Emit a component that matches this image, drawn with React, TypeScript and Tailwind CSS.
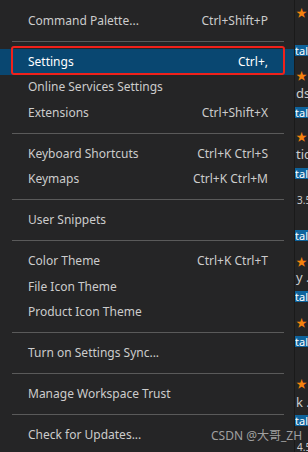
type Item = { label: string; keys?: string; active?: boolean };

const groups: Item[][] = [
  [{ label: 'Command Palette...', keys: 'Ctrl+Shift+P' }],
  [
    { label: 'Settings', keys: 'Ctrl+,', active: true },
    { label: 'Online Services Settings' },
    { label: 'Extensions', keys: 'Ctrl+Shift+X' },
  ],
  [
    { label: 'Keyboard Shortcuts', keys: 'Ctrl+K Ctrl+S' },
    { label: 'Keymaps', keys: 'Ctrl+K Ctrl+M' },
  ],
  [{ label: 'User Snippets' }],
  [
    { label: 'Color Theme', keys: 'Ctrl+K Ctrl+T' },
    { label: 'File Icon Theme' },
    { label: 'Product Icon Theme' },
  ],
  [{ label: 'Turn on Settings Sync...' }],
  [{ label: 'Manage Workspace Trust' }],
  [{ label: 'Check for Updates...' }],
];

function MenuRow({ item }: { item: Item }) {
  return (
    <div
      className={`relative flex h-[25.5px] items-center justify-between pl-[28px] pr-[26px] ${
        item.active ? 'bg-[#094771] text-white' : 'text-[#cccccc]'
      }`}
    >
      <span>{item.label}</span>
      {item.keys && <span>{item.keys}</span>}
      {item.active && (
        <div className="absolute left-[11px] right-[9px] top-[-3px] bottom-0 rounded-[3px] border-2 border-[#f0211b]" />
      )}
    </div>
  );
}

function Star({ className }: { className: string }) {
  return (
    <div className={`flex h-[12px] items-center gap-[2px] ${className}`}>
      <span className="text-[11px] leading-none text-[#f5820d]">★</span>
      <span className="text-[10px] leading-none text-[#cccccc]">5</span>
    </div>
  );
}

function Install({ className }: { className: string }) {
  return (
    <div className={`flex h-[11px] items-center bg-[#0e639c] pl-[1px] text-[11px] leading-none text-white ${className}`}>
      tall
    </div>
  );
}

function Text({ children, className }: { children: string; className: string }) {
  return (
    <div className={`flex h-[14px] items-center whitespace-nowrap text-[13px] leading-none text-[#cccccc] ${className}`}>
      {children}
    </div>
  );
}

function Rating({ children, className }: { children: string; className: string }) {
  return (
    <div className={`flex h-[11px] items-center gap-[1px] whitespace-nowrap text-[10px] leading-none text-[#cccccc] ${className}`}>
      <span className="h-[2px] w-[2px] bg-[#b33]" />
      {children}
    </div>
  );
}

export default function App() {
  return (
    <div
      className="relative flex h-[452px] w-[308px] overflow-hidden bg-[#252526] text-[12px]"
      style={{ fontFamily: '"Noto Sans", "Noto Sans CJK SC", sans-serif' }}
    >
      <div className="w-[294px] shrink-0 pt-[8px]">
        {groups.map((group, gi) => (
          <div key={gi}>
            {gi > 0 && (
              <div className="flex h-[15.5px] items-center pl-[12px] pr-[10px]">
                <div className="h-px w-full bg-[#5a5a5a]" />
              </div>
            )}
            {group.map((item) => (
              <MenuRow key={item.label} item={item} />
            ))}
          </div>
        ))}
      </div>
      <div className="w-px shrink-0 bg-[#1a1a1a]" />
      <div className="flex flex-1 flex-col overflow-hidden bg-[#252526] pl-[1px]">
        <Star className="mt-[7px]" />
        <Install className="mt-[26px] -ml-[2px]" />
        <Star className="mt-[14px]" />
        <Text className="mt-[5px]">ds</Text>
        <Install className="mt-[7px] -ml-[2px]" />
        <Star className="mt-[13px]" />
        <Text className="mt-[5px]">tic</Text>
        <Install className="mt-[7px] -ml-[2px]" />
        <Rating className="mt-[15px]">3.5</Rating>
        <Install className="mt-[25px] -ml-[2px]" />
        <Star className="mt-[15px]" />
        <Text className="mt-[3px]">y .</Text>
        <Install className="mt-[7px] -ml-[2px]" />
        <Star className="mt-[14px]" />
        <Install className="mt-[8px] -ml-[2px]" />
        <Star className="mt-[31px]" />
        <Text className="mt-[6px]">k .</Text>
        <Install className="mt-[6px] -ml-[2px]" />
        <Rating className="mt-[15px]">4.5</Rating>
      </div>
      <div className="absolute left-[211px] top-[428px] whitespace-nowrap text-[12px] leading-[16px] text-[#a0a0a0]">
        CSDN @大哥_ZH
      </div>
    </div>
  );
}
